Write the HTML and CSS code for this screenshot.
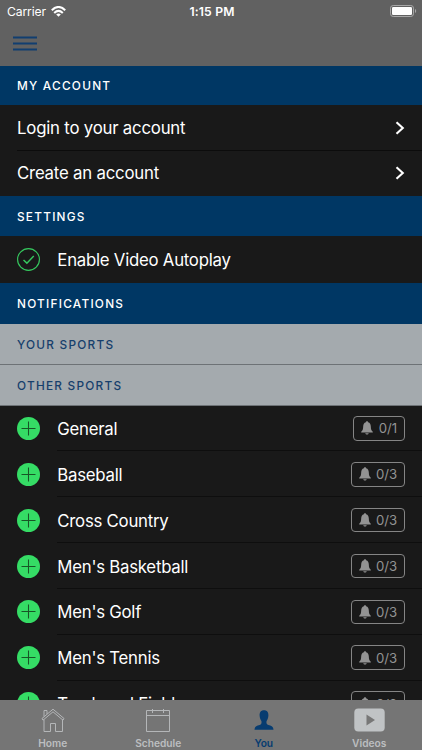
FILE: index.html
```
<!DOCTYPE html>
<html lang="en">
<head>
<meta charset="utf-8">
<meta name="viewport" content="width=device-width">
<title>You</title>
<link rel="stylesheet" href="styles.css">
</head>
<body>
<svg class="symbols" width="0" height="0">
  <symbol id="plus" viewBox="0 0 24 24"><circle cx="12" cy="12" r="12" fill="#35dc65"/><path d="M12 4.700v14.600M4.700 12h14.600" stroke="#185526" stroke-width="1.1" fill="none"/></symbol>
  <symbol id="bell" viewBox="0 0 12 14"><path d="M6 .2c.7 0 1.1.4 1.1 1C9 1.7 9.700 3.300 9.800 5.300C9.900 8.600 10.300 9.600 11.800 10.800V11.500H.2V10.800C1.700 9.600 2.100 8.600 2.200 5.300C2.300 3.300 3 1.700 4.900 1.200C4.900.6 5.300.2 6 .2ZM4.300 12.200h3.400C7.400 13.200 6.800 13.600 6 13.600S4.600 13.200 4.300 12.200Z" fill="#939393"/></symbol>
  <symbol id="chevron" viewBox="0 0 10 14"><path d="M1.500 1.200 7.800 7l-6.300 5.800" fill="none" stroke="#fff" stroke-width="2.100"/></symbol>
</svg>
<header class="top">
  <div class="status">
    <div class="carrier">Carrier
      <svg width="15" height="11" viewBox="0 0 15 11"><g fill="none" stroke="#fff" stroke-width="2.100"><path d="M.8 4.200Q7.500-2.200 14.200 4.200"/><path d="M3.200 6.900Q7.500 2.900 11.800 6.900"/></g><path d="M5.200 8.400Q7.500 6.400 9.800 8.400L7.500 10.800Z" fill="#fff"/></svg>
    </div>
    <div class="clock">1:15 PM</div>
    <svg class="battery" width="27" height="12" viewBox="0 0 27 12"><rect x=".5" y=".5" width="23" height="11" rx="2.700" fill="none" stroke="#a8a8a8"/><rect x="2" y="2" width="20" height="8" rx="1.200" fill="#fff"/><path d="M25 4c1.600.6 1.600 3.400 0 4Z" fill="#a8a8a8"/></svg>
  </div>
  <svg class="menu" width="24" height="15" viewBox="0 0 24 15"><path d="M0 1.500h24M0 7.500h24M0 13.500h24" stroke="#113e70" stroke-width="1.900"/></svg>
</header>
<main class="content">
  <h2 class="section">MY ACCOUNT</h2>
  <div class="link divided"><span>Login to your account</span><svg width="10" height="14"><use href="#chevron"/></svg></div>
  <div class="link"><span>Create an account</span><svg width="10" height="14"><use href="#chevron"/></svg></div>
  <h2 class="section settings">SETTINGS</h2>
  <div class="item option">
    <svg class="mark" width="23" height="23" viewBox="0 0 24 24" fill="none" stroke="#35c85e"><circle cx="12" cy="12" r="11.400" stroke-width="1.150"/><path d="m6.800 12.600 3.500 3.200 7.200-7.500" stroke-width="1.500"/></svg>
    <span class="label">Enable Video Autoplay</span>
  </div>
  <h2 class="section notifications">NOTIFICATIONS</h2>
  <h3 class="section sub">YOUR SPORTS</h3>
  <h3 class="section sub">OTHER SPORTS</h3>
  <div class="sports">
    <div class="item"><svg class="mark" width="23" height="23"><use href="#plus"/></svg><div class="line"><span class="label">General</span><span class="badge narrow"><svg width="12" height="14"><use href="#bell"/></svg>0/1</span></div></div>
    <div class="item"><svg class="mark" width="23" height="23"><use href="#plus"/></svg><div class="line"><span class="label">Baseball</span><span class="badge"><svg width="12" height="14"><use href="#bell"/></svg>0/3</span></div></div>
    <div class="item"><svg class="mark" width="23" height="23"><use href="#plus"/></svg><div class="line"><span class="label">Cross Country</span><span class="badge"><svg width="12" height="14"><use href="#bell"/></svg>0/3</span></div></div>
    <div class="item"><svg class="mark" width="23" height="23"><use href="#plus"/></svg><div class="line"><span class="label">Men's Basketball</span><span class="badge"><svg width="12" height="14"><use href="#bell"/></svg>0/3</span></div></div>
    <div class="item"><svg class="mark" width="23" height="23"><use href="#plus"/></svg><div class="line"><span class="label">Men's Golf</span><span class="badge"><svg width="12" height="14"><use href="#bell"/></svg>0/3</span></div></div>
    <div class="item"><svg class="mark" width="23" height="23"><use href="#plus"/></svg><div class="line"><span class="label">Men's Tennis</span><span class="badge"><svg width="12" height="14"><use href="#bell"/></svg>0/3</span></div></div>
    <div class="item"><svg class="mark" width="23" height="23"><use href="#plus"/></svg><div class="line"><span class="label">Track and Field</span><span class="badge"><svg width="12" height="14"><use href="#bell"/></svg>0/3</span></div></div>
  </div>
</main>
<nav class="tabs">
  <div class="tab"><svg width="24" height="26" viewBox="0 0 24 26" fill="none" stroke="#b4b6b8" stroke-width="1"><path d="M1 11.500 12 2.200 23 11.500M3 12.500V24.500H9.500V16.500H14.500V24.500H21.500V12.500M2 13.200 12 4.800 22 13.200M3 9.500V3.500H6V7M1 11.500l1 1.700M23 11.500l-1 1.700"/></svg><span>Home</span></div>
  <div class="tab"><svg width="24" height="26" viewBox="0 0 24 26" fill="none" stroke="#b4b6b8"><path d="M.5 3.500H23.500V24.500H.5ZM.5 8.500H23.500M6.500 2v4M17.500 2v4"/></svg><span>Schedule</span></div>
  <div class="tab active"><svg width="20" height="26" viewBox="0 0 20 26"><path d="M10 3.200c3.200 0 4.600 2.100 4.400 5.400-.1 2.700-1 4.100-1.800 5.400-.4 1.500-.1 2.900.8 3.500 2.300 1.300 5.900.8 6.100 5.200H.5c.2-4.400 3.800-3.900 6.100-5.200.9-.6 1.200-2 .8-3.500-.8-1.300-1.700-2.700-1.800-5.400C5.400 5.300 6.800 3.200 10 3.200Z" fill="#073c70"/></svg><span>You</span></div>
  <div class="tab"><svg width="31" height="26" viewBox="0 0 31 26"><rect x=".3" y="1.500" width="30.400" height="23" rx="4" fill="#c0c3c5"/><path d="M12.500 7.500v11l8.500-5.500Z" fill="#777"/></svg><span>Videos</span></div>
</nav>
</body>
</html>
```
FILE: styles.css
```
* { box-sizing: border-box; }
body {
  margin: 0;
  width: 422px;
  height: 750px;
  display: flex;
  flex-direction: column;
  overflow: hidden;
  background: #191919;
  color: #fff;
  font-family: Inter, "Liberation Sans", sans-serif;
}
svg { display: block; flex: none; }
.symbols { position: absolute; }
.top { flex: none; height: 65.5px; background: #616161; }
.status {
  height: 22px;
  display: grid;
  grid-template-columns: 1fr auto 1fr;
  align-items: center;
  padding: 0 5px 0 7px;
  font-size: 12.2px;
}
.carrier { display: flex; align-items: center; gap: 5px; letter-spacing: -0.15px; }
.clock { font-size: 12.2px; font-weight: 600; letter-spacing: 0.15px; }
.battery { justify-self: end; }
.menu { margin: 14px 0 0 13px; }
.content { flex: 1; min-height: 0; overflow: hidden; }
.section {
  margin: 0;
  height: 39.7px;
  padding: 1.5px 17px 0;
  display: flex;
  align-items: center;
  background: #003764;
  font-size: 11.8px;
  font-weight: 500;
  letter-spacing: 1.25px;
}
.settings, .notifications { height: 40.3px; }
.sub {
  height: 41px;
  padding-top: 2px;
  background: #a4aaae;
  color: #17406c;
  border-bottom: 1px solid #6d7276;
}
.link {
  height: 45.4px;
  padding: 0 17px;
  display: flex;
  align-items: center;
  justify-content: space-between;
  font-size: 16.8px;
  letter-spacing: -0.21px;
}
.divided { background: linear-gradient(#0c0c0c, #0c0c0c) 17px 100% / 100% 1px no-repeat; }
.item {
  height: 45.85px;
  display: flex;
  align-items: center;
  padding-left: 17px;
  gap: 17.3px;
}
.option { height: 47px; }
.line {
  flex: 1;
  height: 100%;
  display: flex;
  align-items: center;
  justify-content: space-between;
  padding: 1px 17px 0 0;
  border-bottom: 1px solid #0e0e0e;
}
.label { padding-top: 1px; font-size: 16.8px; letter-spacing: -0.25px; }
.badge {
  width: 54px;
  height: 24.5px;
  display: flex;
  align-items: center;
  justify-content: space-between;
  padding: 0 7px;
  border: 1px solid #858585;
  border-radius: 4px;
  color: #939393;
  font-size: 13.2px;
  letter-spacing: -0.1px;
}
.narrow { width: 52px; }
.tabs {
  flex: none;
  height: 50.5px;
  display: grid;
  grid-template-columns: repeat(4, 1fr);
  background: #757575;
}
.tab {
  display: flex;
  flex-direction: column;
  align-items: center;
  padding-top: 7px;
  color: #bcbec0;
  font-size: 10.2px;
  font-weight: 600;
  line-height: 12px;
}
.tab span { margin-top: 4px; }
.active { color: #073c70; }
```
